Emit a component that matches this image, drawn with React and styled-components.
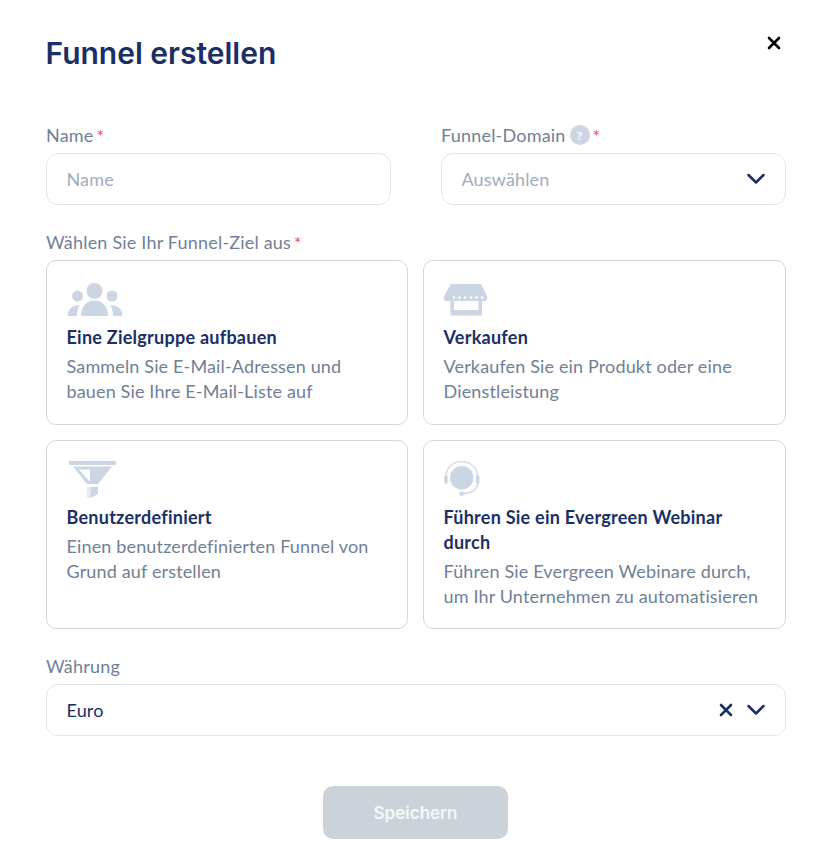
import React from "react";
import styled, { createGlobalStyle } from "styled-components";

const GlobalStyle = createGlobalStyle`
  html, body {
    margin: 0;
    background: #fff;
  }
  * {
    box-sizing: border-box;
  }
`;

const Modal = styled.div`
  width: 829px;
  height: 862px;
  padding: 33px 43px 0 46px;
  font-family: "Lato", "Liberation Sans", sans-serif;
  background: #fff;
`;

const Header = styled.div`
  display: flex;
  justify-content: space-between;
  align-items: flex-start;
  height: 92px;
`;

const Title = styled.h1`
  margin: 0 0 0 -0.5px;
  font-family: "Inter", sans-serif;
  font-size: 30px;
  line-height: 40px;
  font-weight: 600;
  color: #1a2f66;
`;

const CloseButton = styled.button`
  display: flex;
  margin: 3px 5px 0 0;
  padding: 0;
  border: 0;
  background: none;
`;

const TopRow = styled.div`
  display: grid;
  grid-template-columns: 345px 345px;
  column-gap: 50px;
`;

const Label = styled.div`
  display: flex;
  align-items: center;
  height: 20px;
  font-size: 18px;
  letter-spacing: 0.2px;
  color: #6f7f96;
`;

const Required = styled.span`
  align-self: flex-start;
  margin: 2px 0 0 3px;
  font-size: 18px;
  line-height: 18px;
  color: #f4476b;
`;

const HelpDot = styled.span`
  display: flex;
  align-items: center;
  justify-content: center;
  width: 20px;
  height: 20px;
  margin-left: 4px;
  border-radius: 50%;
  background: #cbd5e3;
  color: #fff;
  font-size: 12px;
  font-weight: 700;
`;

const Field = styled.div`
  display: flex;
  align-items: center;
  justify-content: space-between;
  height: 52px;
  margin-top: 8px;
  padding: 0 19px 0 19.5px;
  border: 1px solid #e2e5ea;
  border-radius: 12px;
  font-size: 18px;
  letter-spacing: 0.15px;
  color: ${(props) => (props.$filled ? "#1a2f66" : "#a0acbf")};
`;

const FieldIcons = styled.div`
  display: flex;
  align-items: center;
  gap: 13px;
`;

const GoalLabel = styled(Label)`
  margin-top: 27px;
  margin-bottom: 8px;
`;

const CardGrid = styled.div`
  display: grid;
  grid-template-columns: 362px 363px;
  grid-template-rows: 165px 189px;
  gap: 15px;
`;

const Card = styled.div`
  padding: 20px 20px 0 19.5px;
  border: 1px solid #d3d7dd;
  border-radius: 10px;
`;

const IconBox = styled.div`
  height: 37px;
  margin-bottom: 7px;
`;

const CardTitle = styled.div`
  font-size: 18px;
  line-height: 25px;
  font-weight: 700;
  letter-spacing: 0.25px;
  color: #1a2f66;
`;

const CardText = styled.div`
  margin-top: 4px;
  font-size: 18px;
  line-height: 25px;
  letter-spacing: 0.15px;
  color: #6f7f96;
`;

const CurrencyLabel = styled(Label)`
  margin-top: 27px;
`;

const Footer = styled.div`
  display: flex;
  justify-content: center;
  margin-top: 50px;
  padding-right: 1px;
`;

const SaveButton = styled.button`
  width: 185px;
  height: 53px;
  border: 0;
  border-radius: 10px;
  background: #ccd2d9;
  color: #f7f8fa;
  font-family: "Inter", sans-serif;
  font-size: 17px;
  font-weight: 600;
`;

const Chevron = () => (
  <svg width="20" height="12" viewBox="0 0 20 12" fill="none">
    <path d="M2.500 2l7.500 7.500 7.500-7.500" stroke="#1a2f66" strokeWidth="2.500" strokeLinecap="round" strokeLinejoin="round" />
  </svg>
);

const Cross = ({ color = "#1a2f66", size = 14 }) => (
  <svg width={size} height={size} viewBox="0 0 14 14" fill="none">
    <path d="M2 2l10 10M12 2L2 12" stroke={color} strokeWidth="2.600" strokeLinecap="round" />
  </svg>
);

const PeopleIcon = () => (
  <svg width="56" height="37" viewBox="0 0 56 37" fill="#cbd5e3">
    <circle cx="27.500" cy="10" r="8" />
    <circle cx="10.500" cy="15" r="5.500" />
    <circle cx="45" cy="15" r="5.500" />
    <path d="M14 35c0-9 5-15.500 13.500-15.500S41 26 41 35z" />
    <path d="M0 35c0-6 4-10.500 12-11-1.500 3-2.500 6.500-2.500 11z" transform="translate(0.500 0)" />
    <path d="M55.500 35c0-6-4-10.500-12-11 1.500 3 2.500 6.500 2.500 11z" />
  </svg>
);

const ShopIcon = () => (
  <svg width="44" height="37" viewBox="0 0 44 37" fill="#cbd5e3">
    <path d="M7 3h30l6 12v3a2 2 0 01-2 2H2a2 2 0 01-2-2v-3z" />
    <g fill="#fff">
      <circle cx="10" cy="16.500" r="1.300" />
      <circle cx="15.500" cy="16.500" r="1.300" />
      <circle cx="21" cy="16.500" r="1.300" />
      <circle cx="27" cy="16.500" r="1.300" />
      <circle cx="32.500" cy="16.500" r="1.300" />
      <circle cx="38" cy="16.500" r="1.300" />
    </g>
    <path d="M6.500 20H10v9h24.500v-9H38v14.500H6.500z" />
  </svg>
);

const FunnelIcon = () => (
  <svg width="50" height="38" viewBox="0 0 50 38">
    <path d="M2 0h47v4H2z" fill="#cbd5e3" />
    <path d="M6 5.500h39L31 23H20z" fill="#cbd5e3" />
    <path d="M12 8.500h11V21z" fill="#fff" />
    <path d="M20 26h3.500v11H20z" fill="#e6ebf1" />
    <path d="M23.500 26H31v7l-7.500 4z" fill="#cbd5e3" />
  </svg>
);

const HeadsetIcon = () => (
  <svg width="36" height="36" viewBox="0 0 36 36" fill="none">
    <circle cx="17.700" cy="16.700" r="11.700" fill="#cbd5e3" />
    <path d="M2 15a15.700 14.500 0 0131.500 0" stroke="#d5dde8" strokeWidth="1.600" />
    <rect x="0.300" y="14" width="3.400" height="9" rx="1.700" fill="#cbd5e3" />
    <rect x="32" y="14" width="3.400" height="9" rx="1.700" fill="#cbd5e3" />
    <path d="M33.500 23c-.5 5-5 9-14 9.700" stroke="#cbd5e3" strokeWidth="1.400" />
    <circle cx="17.700" cy="32.700" r="2.200" fill="#cbd5e3" />
  </svg>
);

const goals = [
  {
    id: "audience",
    icon: <PeopleIcon />,
    title: "Eine Zielgruppe aufbauen",
    text: "Sammeln Sie E-Mail-Adressen und bauen Sie Ihre E-Mail-Liste auf",
  },
  {
    id: "sell",
    icon: <ShopIcon />,
    title: "Verkaufen",
    text: "Verkaufen Sie ein Produkt oder eine Dienstleistung",
  },
  {
    id: "custom",
    icon: <FunnelIcon />,
    title: "Benutzerdefiniert",
    text: "Einen benutzerdefinierten Funnel von Grund auf erstellen",
  },
  {
    id: "webinar",
    icon: <HeadsetIcon />,
    title: "Führen Sie ein Evergreen Webinar durch",
    text: "Führen Sie Evergreen Webinare durch, um Ihr Unternehmen zu automatisieren",
  },
];

export default function App() {
  return (
    <Modal>
      <GlobalStyle />
      <Header>
        <Title>Funnel erstellen</Title>
        <CloseButton>
          <Cross color="#000" />
        </CloseButton>
      </Header>

      <TopRow>
        <div>
          <Label>
            Name<Required>*</Required>
          </Label>
          <Field>Name</Field>
        </div>
        <div>
          <Label>
            Funnel-Domain<HelpDot>?</HelpDot>
            <Required>*</Required>
          </Label>
          <Field>
            Auswählen
            <Chevron />
          </Field>
        </div>
      </TopRow>

      <GoalLabel>
        Wählen Sie Ihr Funnel-Ziel aus<Required>*</Required>
      </GoalLabel>
      <CardGrid>
        {goals.map((goal) => (
          <Card key={goal.id}>
            <IconBox>{goal.icon}</IconBox>
            <CardTitle>{goal.title}</CardTitle>
            <CardText>{goal.text}</CardText>
          </Card>
        ))}
      </CardGrid>

      <CurrencyLabel>Währung</CurrencyLabel>
      <Field $filled>
        Euro
        <FieldIcons>
          <Cross />
          <Chevron />
        </FieldIcons>
      </Field>

      <Footer>
        <SaveButton>Speichern</SaveButton>
      </Footer>
    </Modal>
  );
}
